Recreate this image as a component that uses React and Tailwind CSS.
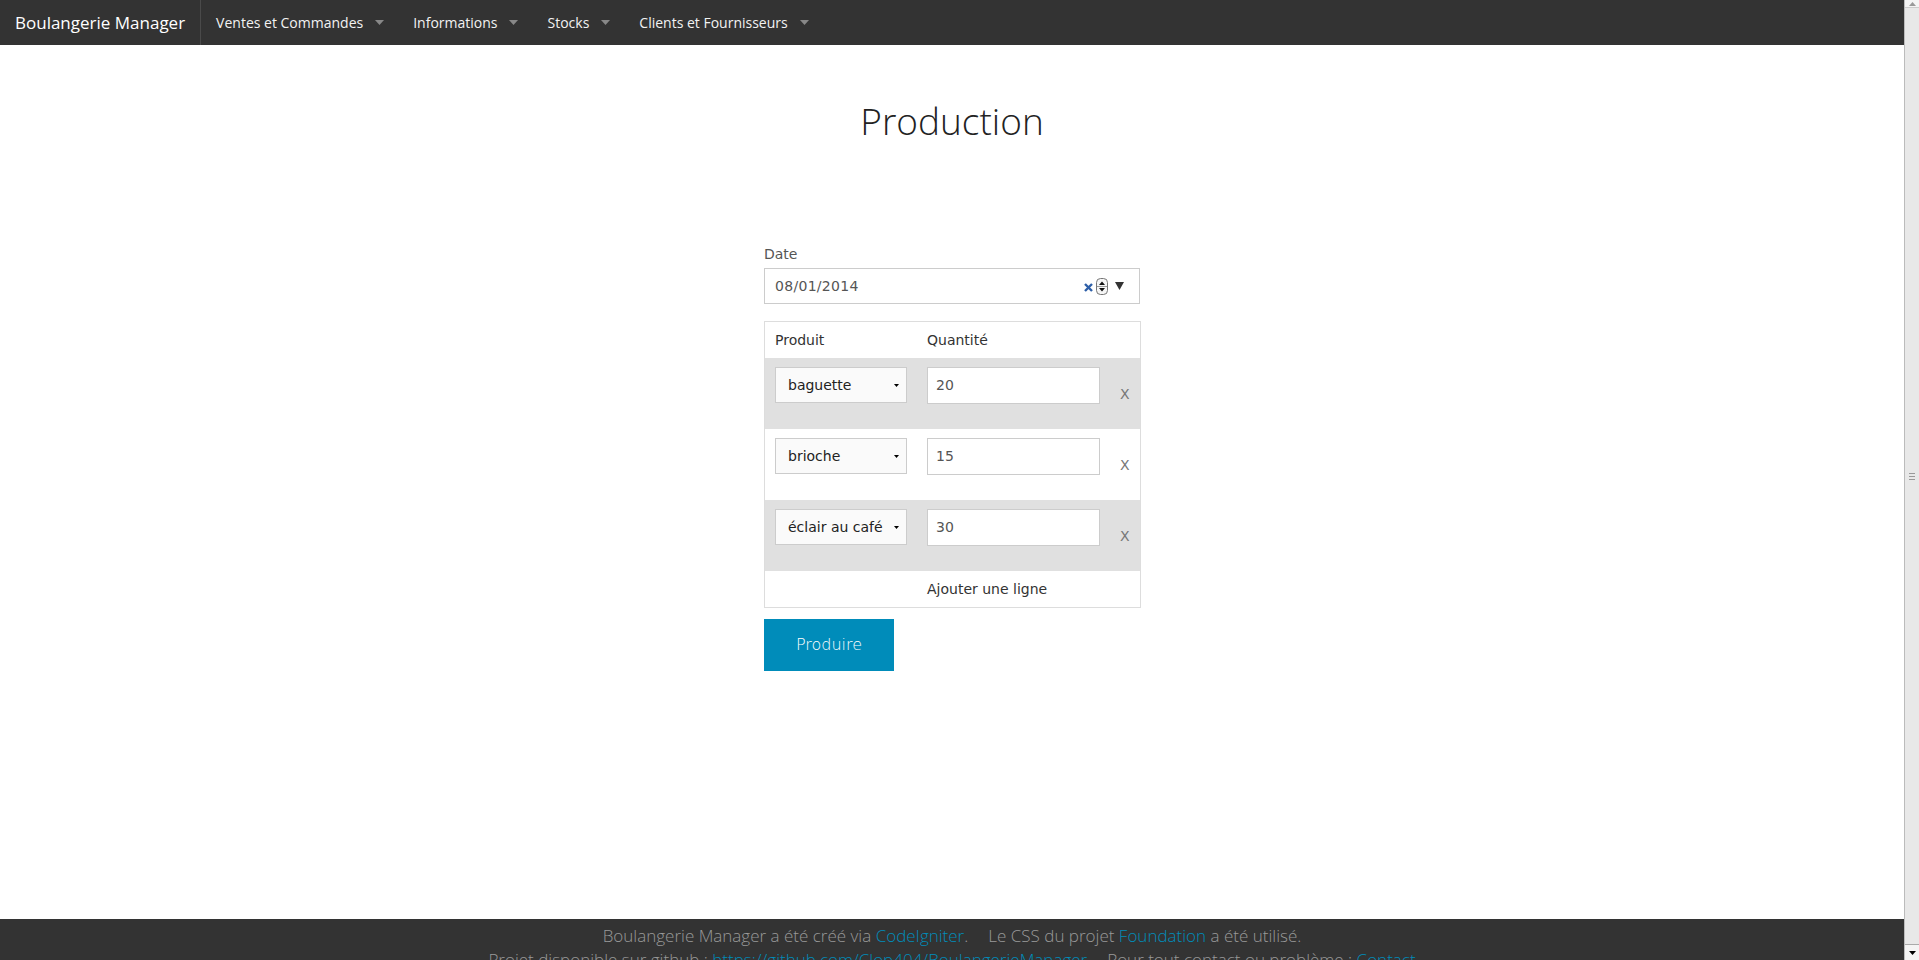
import React from 'react';

const menus = ['Ventes et Commandes', 'Informations', 'Stocks', 'Clients et Fournisseurs'];

const rows = [
  { product: 'baguette', qty: '20', shaded: true },
  { product: 'brioche', qty: '15', shaded: false },
  { product: 'éclair au café', qty: '30', shaded: true },
];

const NavArrow = () => (
  <svg width="9" height="5" viewBox="0 0 9 5" className="ml-[12px]">
    <path d="M0 0 L9 0 L4.5 5 Z" fill="#888" />
  </svg>
);

const SelectBox = ({ value }) => (
  <div className="w-[132px] h-[36px] mb-[16px] border border-[#ccc] bg-[#fafafa] flex items-center pl-[12px] pr-[7px] text-[14px] text-[#222]">
    <span className="flex-1">{value}</span>
    <svg width="5" height="3" viewBox="0 0 5 3">
      <path d="M0 0 L5 0 L2.5 3 Z" fill="#000" />
    </svg>
  </div>
);

const App = () => {
  return (
    <div className="h-screen overflow-y-scroll flex bg-[#f0f0f0] font-['DejaVu_Sans',sans-serif]">
      <div className="flex-1 bg-white">
        {/* Top bar */}
        <nav className="h-[45px] bg-[#333] flex items-stretch font-['Open_Sans',sans-serif] text-white">
          <div className="flex items-center pl-[15px] pr-[15px] text-[17px] border-r border-[#4a4a4a]">
            Boulangerie Manager
          </div>
          {menus.map((m) => (
            <div key={m} className="flex items-center pl-[15px] pr-[14px] text-[14px] text-[#f2f2f2]">
              <span>{m}</span>
              <NavArrow />
            </div>
          ))}
        </nav>

        {/* Main content */}
        <main className="h-[874px] pt-[53px]">
          <h1 className="text-center text-[37px] leading-[46px] font-light text-[#222] font-['Open_Sans',sans-serif]">
            Production
          </h1>

          <div className="w-[376px] mx-auto mt-[100px]">
            <label className="block text-[14px] leading-[20px] text-[#555]">Date</label>
            <div className="mt-[4px] h-[36px] border border-[#ccc] flex items-center pl-[10px] pr-[15px] text-[14px] text-[#555] tracking-[0.3px]">
              <span className="flex-1">08/01/2014</span>
              <svg width="9" height="9" viewBox="0 0 9 9" className="mt-[2px]">
                <path d="M1 1 L8 8 M8 1 L1 8" stroke="#2e5fa8" strokeWidth="2.4" />
              </svg>
              <svg width="12" height="17" viewBox="0 0 12 17" className="ml-[3px]">
                <rect x="0.5" y="0.5" width="11" height="16" rx="4" fill="#f6f6f6" stroke="#777" />
                <path d="M3 7 L9 7 L6 3.5 Z" fill="#111" />
                <path d="M3 10 L9 10 L6 13.5 Z" fill="#111" />
                <line x1="1" y1="8.5" x2="11" y2="8.5" stroke="#999" />
              </svg>
              <svg width="9" height="8" viewBox="0 0 9 8" className="ml-[7px]">
                <path d="M0 0 L9 0 L4.5 8 Z" fill="#333" />
              </svg>
            </div>

            <table className="mt-[17px] w-[376px] border-collapse border border-[#ddd] text-[14px] text-[#333]">
              <thead>
                <tr>
                  <td className="w-[153px] px-[10px] py-[9px] leading-[18px]">Produit</td>
                  <td className="w-[193px] px-[10px] py-[9px] leading-[18px]">Quantité</td>
                  <td className="px-[10px] py-[9px]"></td>
                </tr>
              </thead>
              <tbody>
                {rows.map((r) => (
                  <tr key={r.product} className={r.shaded ? 'bg-[#e0e0e0]' : 'bg-white'}>
                    <td className="px-[10px] pt-[9px] pb-[9px] align-top">
                      <SelectBox value={r.product} />
                    </td>
                    <td className="px-[10px] pt-[9px] pb-[9px] align-top">
                      <div className="w-[173px] h-[37px] mb-[16px] border border-[#ccc] bg-white flex items-center pl-[8px] text-[14px] text-[#555]">
                        {r.qty}
                      </div>
                    </td>
                    <td className="px-[10px] align-middle text-[14px] text-[#777] pt-[2px]">X</td>
                  </tr>
                ))}
                <tr className="bg-white">
                  <td className="px-[10px] py-[9px] leading-[18px]"></td>
                  <td colSpan={2} className="px-[10px] py-[9px] leading-[18px]">Ajouter une ligne</td>
                </tr>
              </tbody>
            </table>

            <button className="mt-[11px] w-[130px] h-[52px] bg-[#008cba] text-white text-[16px] font-light">
              Produire
            </button>
          </div>
        </main>

        {/* Footer */}
        <footer className="bg-[#333] pt-[5px] pb-[12px] text-center text-[17px] leading-[24px] font-light text-[#999] font-['Open_Sans',sans-serif]">
          <p>
            Boulangerie Manager a été créé via <a className="text-[#008cba]">CodeIgniter</a>.
            <span className="inline-block w-[20px]"></span>
            Le CSS du projet <a className="text-[#008cba]">Foundation</a> a été utilisé.
          </p>
          <p>
            Projet disponible sur github : <a className="text-[#008cba] underline">https://github.com/Clop404/BoulangerieManager</a>
            <span className="inline-block w-[20px]"></span>
            Pour tout contact ou problème : <a className="text-[#008cba] underline">Contact</a>
          </p>
        </footer>
      </div>

      {/* scrollbar gutter */}
      <div className="w-[15px] shrink-0 h-[960px] border-l border-[#bbb] bg-[#e8e8e8] flex flex-col items-center justify-between">
        <div className="h-[8px] w-full bg-[#f4f4f4] border-b border-[#ccc] flex items-center justify-center">
          <svg width="7" height="4" viewBox="0 0 7 4"><path d="M0 4 L7 4 L3.5 0 Z" fill="#999" /></svg>
        </div>
        <div className="flex flex-col gap-[2px]">
          <div className="w-[6px] h-px bg-[#999]"></div>
          <div className="w-[6px] h-px bg-[#999]"></div>
          <div className="w-[6px] h-px bg-[#999]"></div>
        </div>
        <div className="h-[16px] w-full bg-[#f4f4f4] border-t border-[#aaa] flex items-center justify-center">
          <svg width="7" height="4" viewBox="0 0 7 4"><path d="M0 0 L7 0 L3.5 4 Z" fill="#000" /></svg>
        </div>
      </div>
    </div>
  );
};

export default App;
